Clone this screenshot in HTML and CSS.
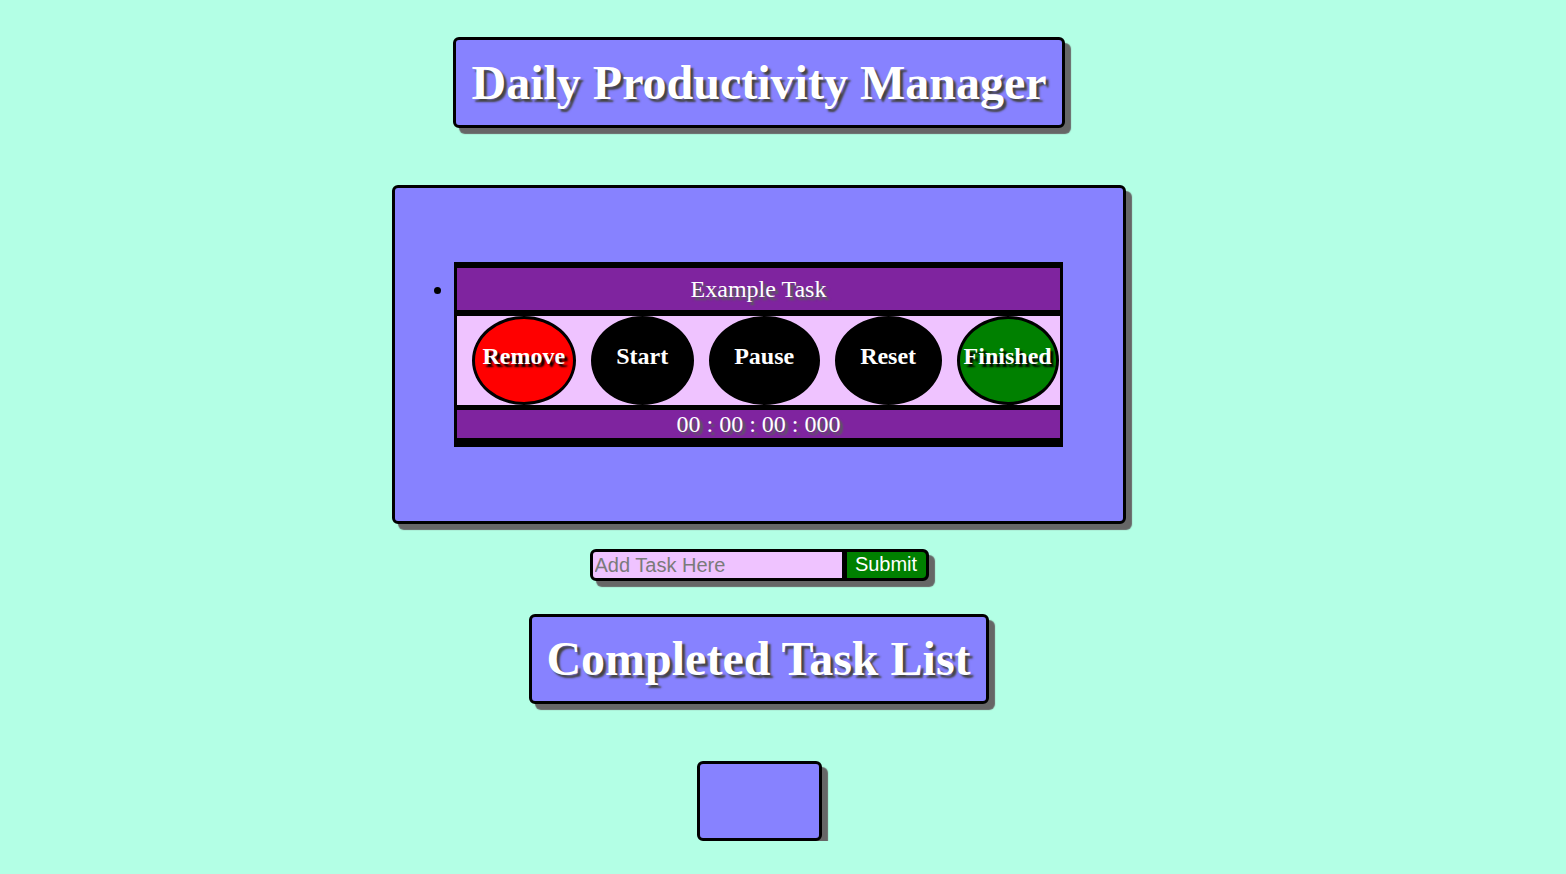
FILE: index.html
```html
<!DOCTYPE html>
<html lang="en">
<head>
<meta charset="utf-8">
<title>Daily Productivity Manager</title>
<link rel="stylesheet" href="styles.css">
</head>
<body>
<div class="page">
  <h1 class="banner">Daily Productivity Manager</h1>

  <div class="tasks">
    <ul class="task-list">
      <li class="task-item">
        <div class="task">
          <div class="task-name">Example Task</div>
          <div class="task-buttons">
            <button class="btn btn-remove">Remove</button>
            <button class="btn btn-dark">Start</button>
            <button class="btn btn-dark">Pause</button>
            <button class="btn btn-dark">Reset</button>
            <button class="btn btn-finished">Finished</button>
          </div>
          <div class="task-timer">00 : 00 : 00 : 000</div>
        </div>
      </li>
    </ul>
  </div>

  <form class="add-form">
    <input class="add-input" type="text" placeholder="Add Task Here">
    <button class="add-submit" type="button">Submit</button>
  </form>

  <h1 class="banner banner-completed">Completed Task List</h1>

  <div class="completed"></div>
</div>
</body>
</html>
```

FILE: styles.css
```css
html, body {
  margin: 0;
  padding: 0;
}

body {
  background: #b3ffe5;
  font-family: "Liberation Serif", "Times New Roman", serif;
}

.page {
  width: 1518px;
  display: flex;
  flex-direction: column;
  align-items: center;
  padding-top: 37px;
}

.banner {
  margin: 0;
  background: #8782ff;
  border: 3px solid #000;
  border-radius: 6px;
  box-shadow: 6px 6px 1px #666;
  color: #fff;
  font-family: "Liberation Serif", "Times New Roman", serif;
  font-weight: 700;
  font-size: 48px;
  line-height: 85px;
  padding: 0 15px;
  text-shadow: 3px 3px 2px #444;
  white-space: nowrap;
}

.banner-completed {
  margin-top: 33px;
  line-height: 84px;
  padding: 0 15px 0 14px;
}

.tasks {
  margin-top: 57px;
  width: 609px;
  padding: 74px 60px 74px 59px;
  background: #8782ff;
  border: 3px solid #000;
  border-radius: 6px;
  box-shadow: 6px 6px 1px #666;
}

.task-list {
  margin: 0;
  padding: 0;
  list-style: disc outside;
}

.task-item {
  font-size: 22px;
}

.task {
  background: #000;
  padding: 6px 3px 9px;
}

.task-name {
  background: #7f249f;
  color: #fff;
  font-size: 24px;
  line-height: 42px;
  text-align: center;
  text-shadow: 3px 3px 2px #556455;
}

.task-buttons {
  margin: 6px 0 5px;
  height: 89px;
  background: #efc3ff;
  display: flex;
  gap: 15px;
  padding-left: 15px;
}

.btn {
  flex: 0 0 auto;
  border: 3px solid #000;
  border-radius: 50%;
  padding: 0 22.5px 8px;
  margin: 0;
  color: #fff;
  font-family: "Liberation Serif", "Times New Roman", serif;
  font-weight: 700;
  font-size: 24px;
  text-shadow: 3px 3px 2px #000;
  white-space: nowrap;
}

.btn-dark {
  background: #000;
}

.btn-remove {
  background: #ff0000;
  padding: 0 7.5px 8px;
}

.btn-finished {
  background: #008000;
  padding: 0 4px 8px;
}

.task-timer {
  background: #7f249f;
  color: #fff;
  font-size: 24px;
  line-height: 28px;
  text-align: center;
  text-shadow: 3px 3px 2px #556455;
}

.add-form {
  margin: 25px 0 0;
  display: flex;
  background: #000;
  border: 3px solid #000;
  border-radius: 6px;
  box-shadow: 6px 6px 1px #666;
}

.add-input {
  width: 249px;
  height: 26px;
  box-sizing: border-box;
  border: none;
  outline: none;
  margin: 0;
  padding: 0 2px;
  background: #efc3ff;
  font-family: "Liberation Sans", Arial, sans-serif;
  font-size: 20px;
  line-height: 24px;
  color: #333;
  border-radius: 3px 0 0 3px;
}

.add-input::placeholder {
  color: #7a7a7a;
}

.add-submit {
  margin: 0 0 0 5px;
  width: 79px;
  height: 26px;
  border: none;
  padding: 0 0 2px;
  background: #008000;
  color: #fff;
  font-family: "Liberation Sans", Arial, sans-serif;
  font-size: 20px;
  border-radius: 0 4px 4px 0;
}

.completed {
  margin-top: 57px;
  width: 119px;
  height: 74px;
  background: #8782ff;
  border: 3px solid #000;
  border-radius: 6px;
  box-shadow: 6px 6px 1px #666;
}
```
